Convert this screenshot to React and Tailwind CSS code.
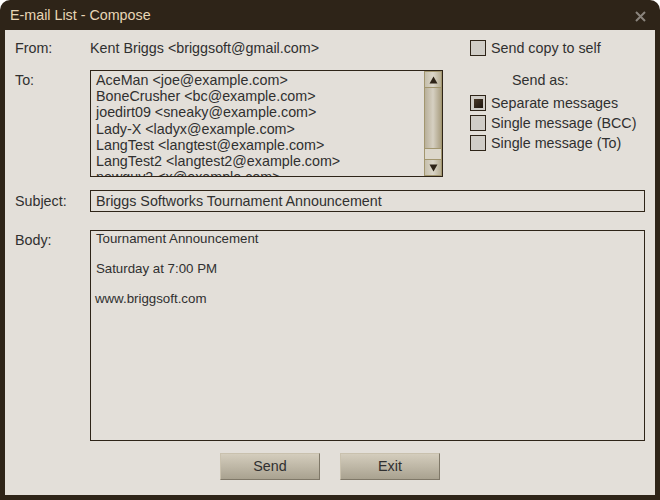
import React from 'react';

const recipients = [
  'AceMan <joe@example.com>',
  'BoneCrusher <bc@example.com>',
  'joedirt09 <sneaky@example.com>',
  'Lady-X <ladyx@example.com>',
  'LangTest <langtest@example.com>',
  'LangTest2 <langtest2@example.com>',
  'newguy2 <x@example.com>',
];

const CheckBox = ({ checked, label }) => (
  <div className="flex items-center h-[16px] gap-[5px]">
    <div className="w-[16px] h-[16px] border border-[#2e2418] bg-[#d0cdc7] flex items-center justify-center">
      {checked && <div className="w-[9px] h-[9px] bg-gradient-to-br from-[#4a3a28] to-[#1f1710]" />}
    </div>
    <span className="leading-[16px]">{label}</span>
  </div>
);

const ScrollBtn = ({ up }) => (
  <div className="h-[17px] border border-[#a2966f] bg-gradient-to-r from-[#c6bfab] via-[#dbd6c9] to-[#b7ae94] flex items-center justify-center">
    <svg width="9" height="8" viewBox="0 0 9 8">
      {up ? <path d="M4.5 0.5 L8.5 7.5 L0.5 7.5 Z" fill="#2e2418" /> : <path d="M0.5 0.5 L8.5 0.5 L4.5 7.5 Z" fill="#2e2418" />}
    </svg>
  </div>
);

const Button = ({ children }) => (
  <button className="w-[100px] h-[27px] border border-t-[#c9c1ae] border-l-[#c9c1ae] border-r-[#7f7868] border-b-[#7f7868] bg-gradient-to-b from-[#d4cdbd] to-[#a9a290] text-[#303030] text-[14.3px]">
    {children}
  </button>
);

export default function App() {
  return (
    <div className="w-[660px] h-[500px] bg-[#2e2418] rounded-t-[10px] flex flex-col px-[5px] pb-[5px] text-[#303030] text-[14.3px]" style={{ fontFamily: '"Liberation Sans", Arial, sans-serif' }}>
      {/* Title bar */}
      <div className="h-[30px] flex items-center justify-between pl-[5px] pr-[9px] pt-[2px] shrink-0">
        <span className="text-[#e8d6b6] text-[14.3px]">E-mail List - Compose</span>
        <svg width="11" height="11" viewBox="0 0 11 11">
          <path d="M1 1 L10 10 M10 1 L1 10" stroke="#8a847c" strokeWidth="2" />
        </svg>
      </div>

      {/* Content */}
      <div className="flex-1 bg-[#e3dfd9] flex flex-col pl-[10px] pr-[10px]">
        <div className="flex">
          {/* Left: From / To */}
          <div className="w-[428px] flex flex-col">
            <div className="flex h-[20px] mt-[9px] items-center">
              <span className="w-[75px]">From:</span>
              <span>Kent Briggs &lt;briggsoft@gmail.com&gt;</span>
            </div>
            <div className="flex mt-[11px]">
              <span className="w-[75px] pt-[2px] leading-[16px]">To:</span>
              <div className="w-[353px] h-[107px] border border-[#2e2418] flex">
                <div className="flex-1 overflow-hidden pl-[5px] pt-[1px] leading-[16.2px] whitespace-nowrap">
                  {recipients.map((r) => (
                    <div key={r}>{r}</div>
                  ))}
                </div>
                <div className="w-[18px] flex flex-col">
                  <ScrollBtn up />
                  <div className="h-[61px] border border-t-0 border-[#a2966f] bg-gradient-to-r from-[#b9b09a] via-[#d6d0c2] to-[#aba083]" />
                  <div className="flex-1 bg-[#dcd7cb] border-x border-[#a2966f]" />
                  <ScrollBtn />
                </div>
              </div>
            </div>
          </div>

          {/* Right: options */}
          <div className="ml-[27px] flex flex-col">
            <div className="mt-[10px]">
              <CheckBox label="Send copy to self" />
            </div>
            <div className="mt-[16px] pl-[42px] leading-[16px]">Send as:</div>
            <div className="mt-[7px] flex flex-col gap-[4px]">
              <CheckBox checked label="Separate messages" />
              <CheckBox label="Single message (BCC)" />
              <CheckBox label="Single message (To)" />
            </div>
          </div>
        </div>

        {/* Subject */}
        <div className="flex mt-[13px]">
          <span className="w-[75px] leading-[22px]">Subject:</span>
          <div className="w-[556px] h-[22px] border border-[#2e2418] pl-[5px] pt-px flex items-center">
            Briggs Softworks Tournament Announcement
          </div>
        </div>

        {/* Body */}
        <div className="flex mt-[18px]">
          <span className="w-[75px] pt-[2px] leading-[16px]">Body:</span>
          <div className="w-[556px] h-[211px] border border-[#2e2418] pl-[5px] text-[13.3px] leading-[15px]">
            <div>Tournament Announcement</div>
            <div>&nbsp;</div>
            <div>Saturday at 7:00 PM</div>
            <div>&nbsp;</div>
            <div className="-ml-px">www.briggsoft.com</div>
          </div>
        </div>

        {/* Buttons */}
        <div className="flex justify-center gap-[20px] mt-[12px]">
          <Button>Send</Button>
          <Button>Exit</Button>
        </div>
      </div>
    </div>
  );
}
